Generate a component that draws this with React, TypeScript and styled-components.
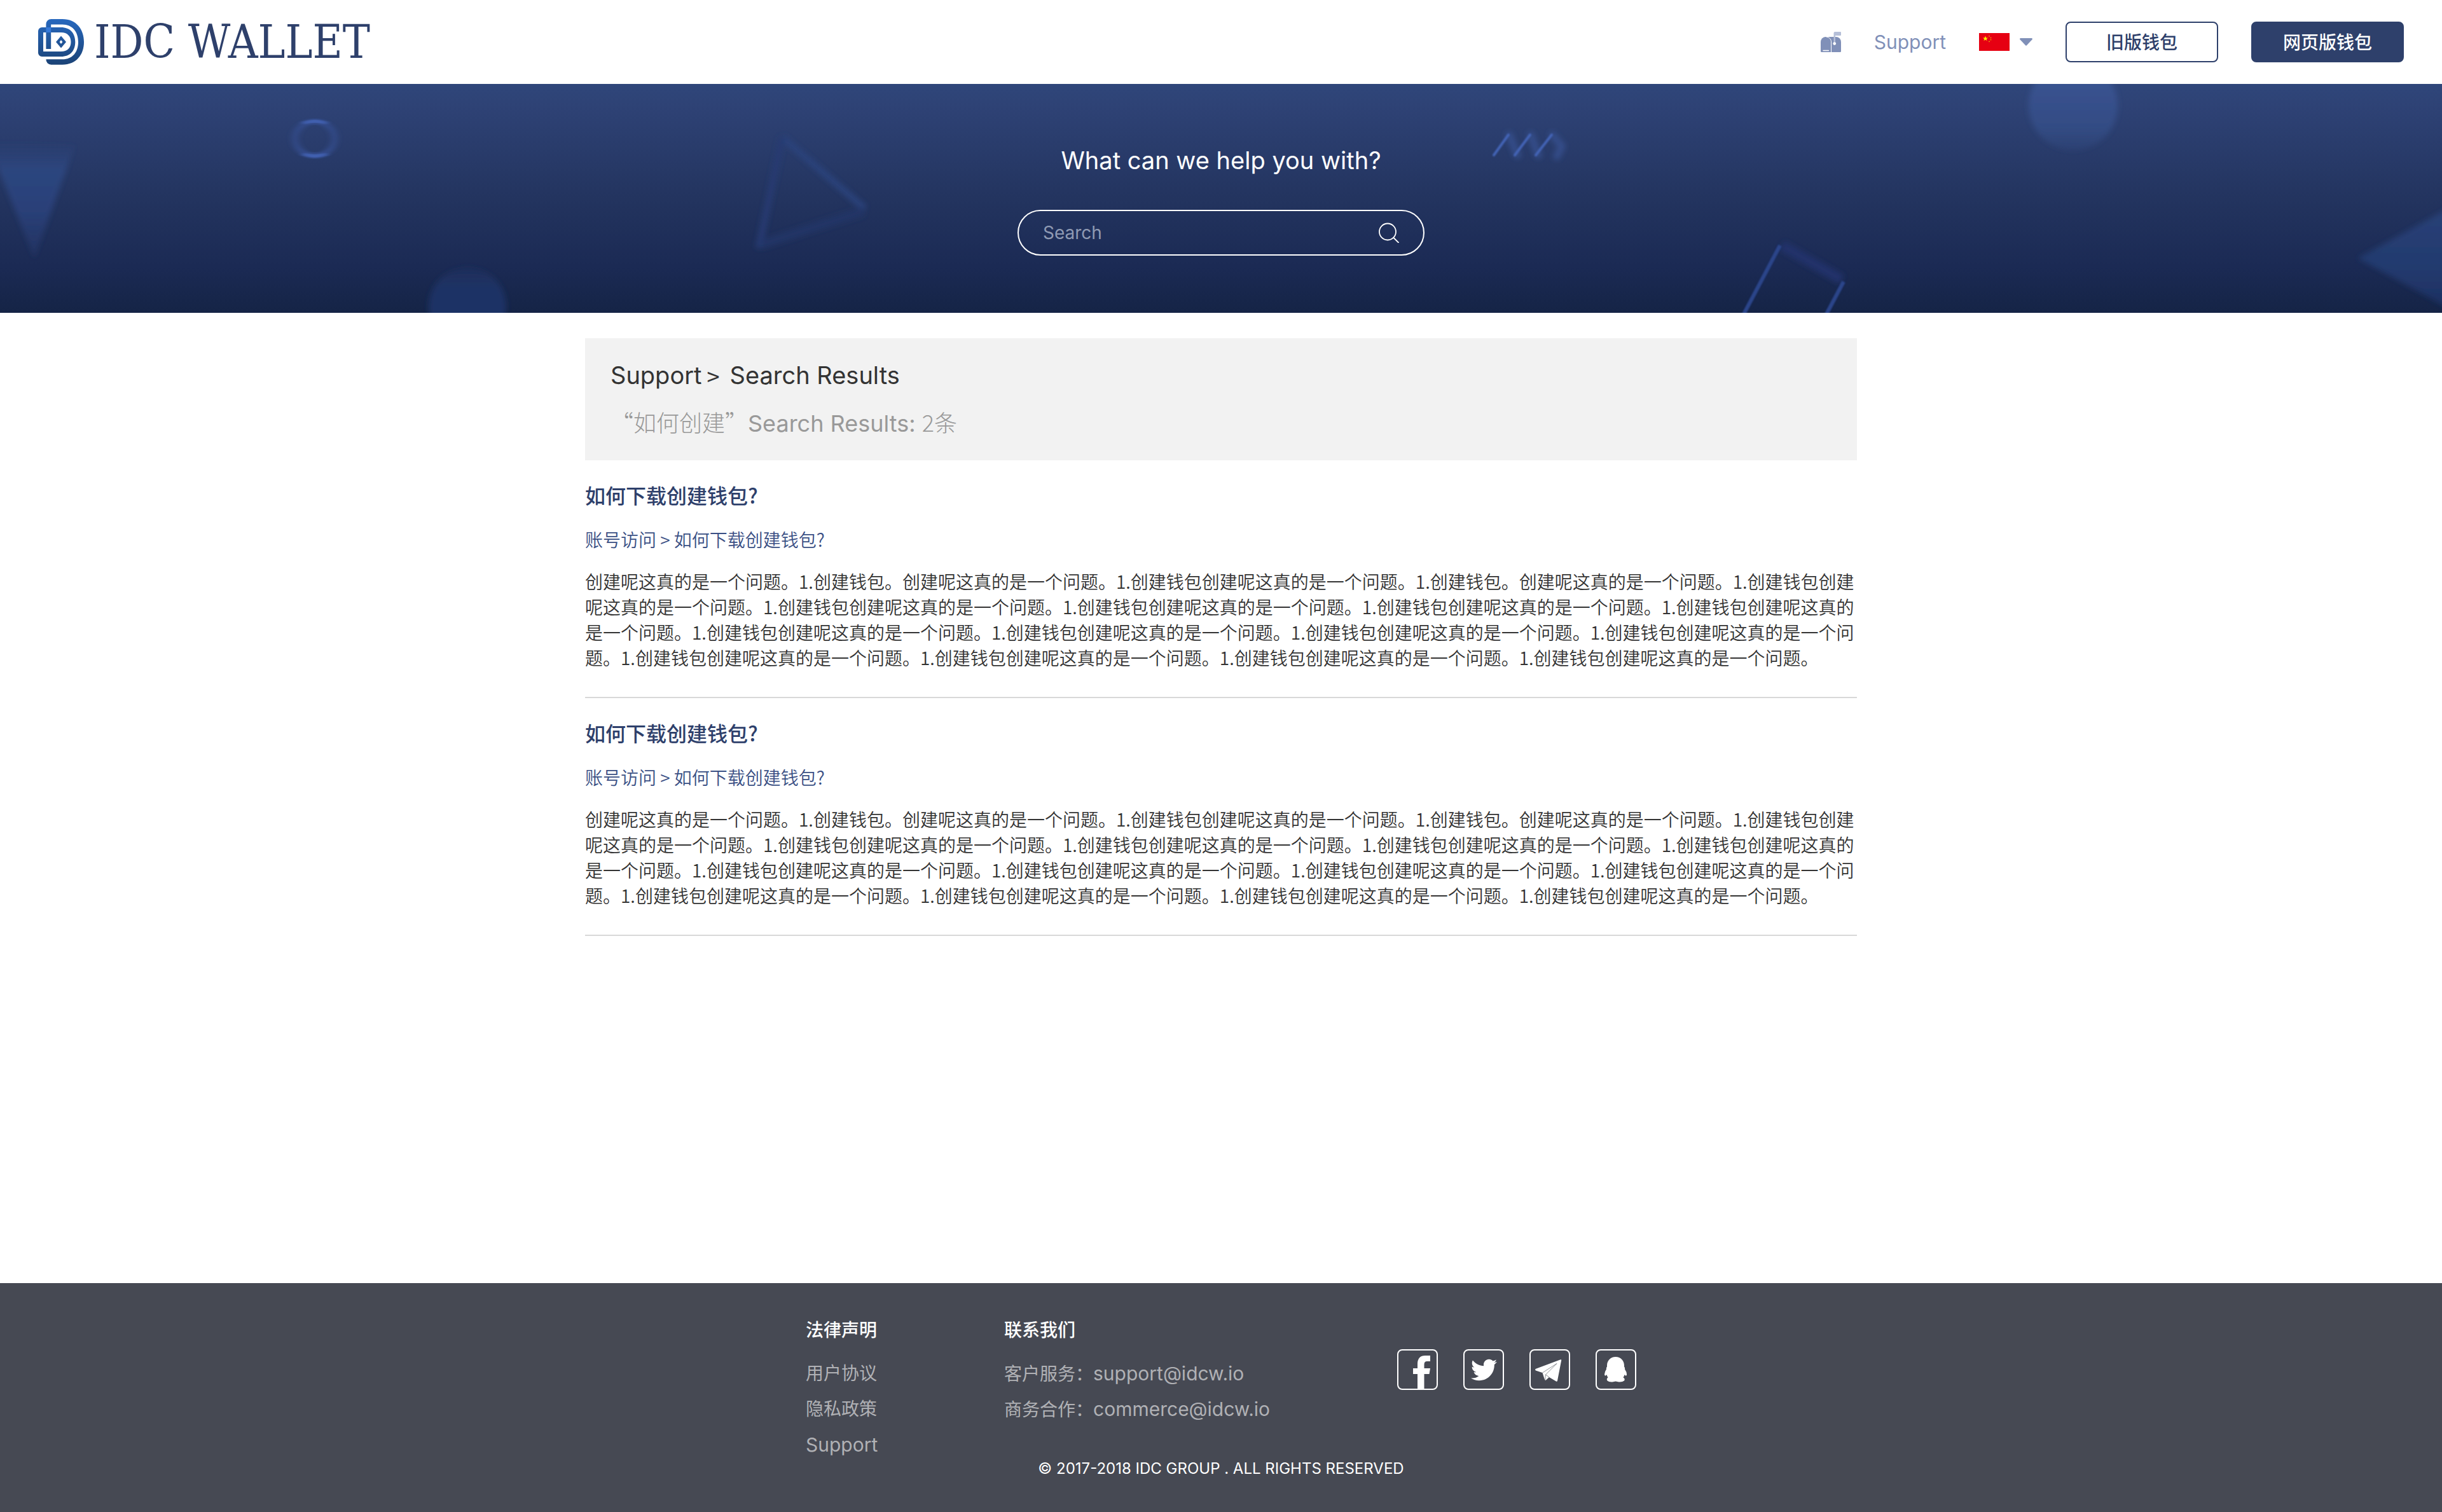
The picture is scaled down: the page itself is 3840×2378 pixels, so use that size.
import React from 'react';
import styled, { createGlobalStyle } from 'styled-components';
import { FaTwitter } from 'react-icons/fa';

const NAVY = '#2e406b';
const MUTED_BLUE = '#8090b8';
const CJK = "'Noto Sans CJK SC', sans-serif";

const GlobalStyle = createGlobalStyle`
  *, *::before, *::after { box-sizing: border-box; }
  body {
    margin: 0;
    background: #fff;
    color: #333;
    font-family: Inter, ${CJK};
    font-size: 28px;
    line-height: 40px;
  }
  h1, h2, h3, p, ul { margin: 0; padding: 0; }
  ul { list-style: none; }
  a { color: inherit; text-decoration: none; }
  svg { display: block; }
`;

const Page = styled.div`
  display: flex;
  flex-direction: column;
  min-height: 100vh;
`;

/* Header */

const Header = styled.header`
  display: flex;
  align-items: center;
  justify-content: space-between;
  height: 132px;
  padding: 0 60px;
`;

const Brand = styled.a`
  display: flex;
  align-items: center;
  gap: 16px;
  color: ${NAVY};
  font-family: 'DejaVu Serif Condensed', 'DejaVu Serif', serif;
  font-size: 72px;
  line-height: 72px;
`;

const Nav = styled.nav`
  display: flex;
  align-items: center;
  gap: 52px;
  color: ${MUTED_BLUE};
`;

const LatinLink = styled.a`
  font-size: 30px;
  line-height: 40px;
`;

const LanguageButton = styled.button`
  display: flex;
  align-items: center;
  gap: 16px;
  padding: 0;
  border: 0;
  background: none;
  cursor: pointer;
`;

const WalletButton = styled.button<{ $filled?: boolean }>`
  width: 240px;
  height: 64px;
  padding: 0 0 2px;
  border: 2px solid ${NAVY};
  border-radius: 8px;
  background: ${({ $filled }) => ($filled ? NAVY : '#fff')};
  color: ${({ $filled }) => ($filled ? '#fff' : NAVY)};
  font: 500 28px/40px ${CJK};
  cursor: pointer;
`;

/* Hero */

const Hero = styled.section`
  position: relative;
  display: flex;
  flex-direction: column;
  align-items: center;
  gap: 54px;
  height: 360px;
  padding-top: 96px;
  overflow: hidden;
  background: linear-gradient(#2f467a 0%, #2e4275 10%, #23345f 50%, #1b2a54 80%, #152446 100%);
`;

const HeroArt = styled.svg`
  position: absolute;
  inset: 0;
  width: 100%;
  height: 100%;
`;

const HeroTitle = styled.h1`
  position: relative;
  color: #fff;
  font-size: 38px;
  font-weight: 400;
  line-height: 48px;
`;

const SearchForm = styled.form`
  position: relative;
  display: flex;
  align-items: center;
  width: 640px;
  height: 72px;
  padding: 0 38px;
  border: 2px solid #fff;
  border-radius: 36px;
`;

const SearchInput = styled.input`
  flex: 1;
  min-width: 0;
  padding: 0;
  border: 0;
  outline: 0;
  background: none;
  color: #fff;
  font: inherit;
  &::placeholder { color: #8f9ab3; opacity: 1; }
`;

const SearchButton = styled.button`
  padding: 0;
  border: 0;
  background: none;
  cursor: pointer;
`;

/* Results */

const Main = styled.main`
  flex: 1;
  width: 100%;
  max-width: 2080px;
  margin: 0 auto;
  padding: 40px 40px 80px;
`;

const Summary = styled.section`
  display: flex;
  flex-direction: column;
  gap: 28px;
  padding: 34px 40px;
  background: #f2f2f2;
  font-size: 38px;
  line-height: 48px;
`;

const Trail = styled.nav`
  display: flex;
  gap: 8px;
`;

const Separator = styled.span`
  padding-right: 8px;
  font-family: ${CJK};
  font-size: 36px;
`;

const Count = styled.p`
  color: #999;
  font-size: 36px;
`;

const Cjk = styled.span`
  font-family: ${CJK};
  font-weight: 300;
  line-height: 1;
`;

const Result = styled.article`
  display: flex;
  flex-direction: column;
  padding: 30px 0 42px;
  border-bottom: 2px solid #d8d8d8;
  font-family: ${CJK};
  font-weight: 350;
`;

const ResultTitle = styled.h2`
  margin-bottom: 26px;
  color: ${NAVY};
  font-size: 32px;
  font-weight: 500;
  line-height: 48px;
`;

const ResultPath = styled.p`
  margin-bottom: 26px;
  color: #3a4f84;
`;

/* Footer */

const Footer = styled.footer`
  display: flex;
  flex-direction: column;
  gap: 2px;
  padding: 54px 40px 52px;
  background: #464953;
  color: #b0b1b5;
`;

const FooterColumns = styled.div`
  display: grid;
  grid-template-columns: 312px 618px 376px;
  justify-content: center;
`;

const FooterTitle = styled.h3`
  margin-bottom: 28px;
  color: #fff;
  font-size: 28px;
  font-weight: 500;
`;

const LinkList = styled.ul`
  display: flex;
  flex-direction: column;
  gap: 16px;
  li { height: 40px; }
`;

const SocialLinks = styled.div`
  display: flex;
  gap: 40px;
  padding-top: 50px;
`;

const SocialLink = styled.a`
  display: flex;
  align-items: center;
  justify-content: center;
  width: 64px;
  height: 64px;
  border: 2px solid #fff;
  border-radius: 8px;
  color: #fff;
`;

const Copyright = styled.p`
  color: #fff;
  font-size: 24px;
  line-height: 32px;
  text-align: center;
`;

const LogoMark = () => (
  <svg width="72" height="72" viewBox="0 0 72 72" aria-hidden="true">
    <defs>
      <linearGradient id="mark" gradientUnits="userSpaceOnUse" x1="0" y1="0" x2="0" y2="72">
        <stop offset="0" stopColor="#2768be" />
        <stop offset="1" stopColor="#1b4376" />
      </linearGradient>
    </defs>
    <g fill="url(#mark)">
      <path d="M12.4 47V8a8 8 0 0 1 8-8H38C60 0 72 16 72 36S60 71.7 38 71.7H20.4a8 8 0 0 1-8-8.4H38C54 63.3 63 52 63 36S54 8.4 38 8.4H20.2V47z" />
      <path
        fillRule="evenodd"
        d="M6 13H36C50 13 58.3 22 58.3 36S50 59 36 59H6a6 6 0 0 1-6-6V19a6 6 0 0 1 6-6zM8 21V51H36C46 51 51.5 45 51.5 36S46 21 36 21z"
      />
      <path fillRule="evenodd" d="M36 26.5L44 36L36 45.5L28 36zM36 33L33.6 36L36 39L38.4 36z" />
    </g>
    <rect x="12.4" y="13" width="7.8" height="8" fill="#3579d9" />
  </svg>
);

const MailboxIcon = () => (
  <svg width="32" height="32" viewBox="0 0 32 32" aria-hidden="true">
    <path d="M8 8H24a8 8 0 0 1 8 8V30.500a1.500 1.500 0 0 1-1.500 1.500H1.500A1.500 1.500 0 0 1 0 30.500V16a8 8 0 0 1 8-8z" fill="#8090b8" />
    <path d="M9 8.200C14 8.500 16.500 12 16.500 16V32" fill="none" stroke="#fff" strokeWidth="1" />
    <path d="M4 29.500H12.500" stroke="#fff" strokeWidth="1.400" strokeLinecap="round" />
    <path d="M20.500 19V2a2 2 0 0 1 2-2H31a1 1 0 0 1 1 1V5a1 1 0 0 1-1 1H23V19z" fill="#b5bfd8" />
    <circle cx="21.700" cy="18.600" r="2.400" fill="#fff" />
  </svg>
);

const ChinaFlag = () => (
  <svg width="48" height="28" viewBox="0 0 48 28" aria-hidden="true">
    <rect width="48" height="28" fill="#e60012" />
    <path d="M10 4.500L11.100 7.400H14L11.700 9.200L12.600 12L10 10.400L7.400 12L8.300 9.200L6 7.400H8.900z" fill="#fff100" />
    <g fill="#e8850c">
      <circle cx="16" cy="4.800" r="1" />
      <circle cx="18.500" cy="7.400" r="1" />
      <circle cx="18.500" cy="10.600" r="1" />
      <circle cx="16" cy="13.200" r="1" />
    </g>
  </svg>
);

const HeroShapes = () => (
  <HeroArt viewBox="0 0 3840 360" preserveAspectRatio="xMidYMid slice" aria-hidden="true">
    <defs>
      <filter id="soft" x="-30%" y="-30%" width="160%" height="160%">
        <feGaussianBlur stdDeviation="4" />
      </filter>
      <filter id="fine" x="-30%" y="-30%" width="160%" height="160%">
        <feGaussianBlur stdDeviation="1.2" />
      </filter>
      <filter id="side" x="-40%" y="-10%" width="180%" height="120%">
        <feGaussianBlur stdDeviation="5 0" />
      </filter>
      <linearGradient id="wedge" x1="0" y1="0" x2="0" y2="1">
        <stop offset="0" stopColor="#2e4780" stopOpacity="0" />
        <stop offset="0.25" stopColor="#2d467f" />
        <stop offset="0.6" stopColor="#294078" />
        <stop offset="1" stopColor="#26386c" stopOpacity="0.5" />
      </linearGradient>
      <linearGradient id="sunTop" x1="0" y1="0" x2="0" y2="1">
        <stop offset="0.3" stopColor="#39528f" />
        <stop offset="0.75" stopColor="#334c84" />
        <stop offset="1" stopColor="#2f4579" stopOpacity="0.6" />
      </linearGradient>
      <linearGradient id="sunBottom" x1="0" y1="0" x2="0" y2="1">
        <stop offset="0" stopColor="#1f3161" stopOpacity="0.6" />
        <stop offset="0.25" stopColor="#1f3365" />
        <stop offset="1" stopColor="#1d3165" />
      </linearGradient>
      <linearGradient id="rightWedge" x1="0" y1="0" x2="0" y2="1">
        <stop offset="0" stopColor="#2a4178" />
        <stop offset="0.6" stopColor="#223a6e" />
        <stop offset="1" stopColor="#1d2f60" />
      </linearGradient>
    </defs>
    <path d="M-20 90L118 96L54 274z" fill="url(#wedge)" filter="url(#soft)" />
    <g fill="none">
      <ellipse cx="495" cy="86" rx="31" ry="27" stroke="#304a86" strokeWidth="10" filter="url(#side)" />
      <path d="M477 62Q495 55 513 62M477 110Q495 117 513 110" stroke="#3f5fae" strokeWidth="5" filter="url(#side)" />
    </g>
    <g fill="none" filter="url(#soft)">
      <path d="M1230 84L1360 196" stroke="#29427b" strokeWidth="10" />
      <path d="M1230 84L1193 258" stroke="#263b72" strokeWidth="10" />
      <path d="M1358 200L1198 252" stroke="#213466" strokeWidth="14" />
    </g>
    <circle cx="735" cy="350" r="61" fill="url(#sunBottom)" filter="url(#soft)" />
    <circle cx="3260" cy="34" r="70" fill="url(#sunTop)" filter="url(#soft)" />
    <g fill="none" strokeLinecap="round">
      <path
        d="M2373 80L2386 112M2407 80L2419 112M2441 80L2456 98L2448 114"
        stroke="#344e8a"
        strokeWidth="11"
        filter="url(#soft)"
      />
      <path
        d="M2349 112L2372 80M2382 112L2406 80M2415 112L2440 80"
        stroke="#4363b5"
        strokeWidth="4"
        filter="url(#fine)"
      />
    </g>
    <path d="M2802 254L2896 308" stroke="#20336a" strokeWidth="16" filter="url(#soft)" />
    <path d="M2799 254L2742 362M2899 311L2872 362" stroke="#2b458a" strokeWidth="6" fill="none" filter="url(#fine)" />
    <path d="M3860 190L3708 274L3860 358z" fill="url(#rightWedge)" filter="url(#soft)" />
  </HeroArt>
);

const FacebookIcon = () => (
  <svg width="60" height="60" viewBox="2 2 60 60" aria-hidden="true">
    <path d="M32 63V39H25V30H32V23C32 14.500 36.500 10 44 10H52V19H47C44 19 42.500 20.500 42.500 24V30H52L50.500 39H42.500V63z" fill="#fff" />
  </svg>
);

const TelegramIcon = () => (
  <svg width="60" height="60" viewBox="2 2 60 60" aria-hidden="true">
    <path d="M9.500 31L49 16.200Q50.500 16 50.200 17.500L44 49.500Q43.500 51.500 42 50.500L31 44L26 48.500Q24.500 49.500 24 48L20.500 37L10 33.500Q8.300 32.500 9.500 31z" fill="#fff" />
    <path d="M20.500 37L43 22.500L25.500 40L24.500 49M25.500 40L31 44" fill="none" stroke="#464953" strokeWidth="0.600" />
  </svg>
);

const QqIcon = () => (
  <svg width="60" height="60" viewBox="2 2 60 60" aria-hidden="true">
    <path
      d="M31.500 12C39.500 12 45 18 45 25.500V27.500Q46.500 29 46 31.500Q49.500 36.500 49 40.500Q48 43 45.500 40Q45 42.500 43.500 44.500Q47 46.500 45 49.500Q42 52 36.500 51.500L31.500 50.500L26.500 51.500Q21 52 18.500 49.500Q16.500 46.500 19.500 44.500Q18 42.500 17.500 40Q15 43 14.200 40.500Q13.500 36.500 17 31.500Q16.500 29 18 27.500V25.500C18 18 23.500 12 31.500 12z"
      fill="#fff"
    />
  </svg>
);

const SENTENCE = '1.创建钱包创建呢这真的是一个问题。';
const OPENING = '创建呢这真的是一个问题。1.创建钱包。';
const EXCERPT = OPENING + '创建呢这真的是一个问题。' + SENTENCE + '1.创建钱包。创建呢这真的是一个问题。' + SENTENCE.repeat(13);

const RESULTS = [1, 2].map((id) => ({
  id,
  title: '如何下载创建钱包?',
  path: '账号访问 > 如何下载创建钱包?',
  excerpt: EXCERPT,
}));

const LEGAL_LINKS = ['用户协议', '隐私政策'];
const CONTACTS = [
  { label: '客户服务：', email: 'support@idcw.io' },
  { label: '商务合作：', email: 'commerce@idcw.io' },
];
const SOCIALS = [
  { name: 'Facebook', icon: <FacebookIcon /> },
  { name: 'Twitter', icon: <FaTwitter size={41} /> },
  { name: 'Telegram', icon: <TelegramIcon /> },
  { name: 'QQ', icon: <QqIcon /> },
];

export default function App() {
  return (
    <Page>
      <GlobalStyle />
      <Header>
        <Brand href="#">
          <LogoMark />
          IDC WALLET
        </Brand>
        <Nav>
          <a href="#" aria-label="Mail">
            <MailboxIcon />
          </a>
          <LatinLink href="#">Support</LatinLink>
          <LanguageButton type="button" aria-haspopup="listbox" aria-label="Language">
            <ChinaFlag />
            <svg width="20" height="12" viewBox="0 0 20 12" aria-hidden="true">
              <path d="M1 0H19Q20.500 1 19.500 2.200L11 11.300Q10 12.300 9 11.300L0.500 2.200Q-0.500 1 1 0z" fill={MUTED_BLUE} />
            </svg>
          </LanguageButton>
          <WalletButton type="button">旧版钱包</WalletButton>
          <WalletButton type="button" $filled>网页版钱包</WalletButton>
        </Nav>
      </Header>

      <Hero>
        <HeroShapes />
        <HeroTitle>What can we help you with?</HeroTitle>
        <SearchForm role="search" onSubmit={(event) => event.preventDefault()}>
          <SearchInput type="text" placeholder="Search" aria-label="Search" />
          <SearchButton type="submit" aria-label="Search">
            <svg width="32" height="32" viewBox="0 0 32 32" fill="none" stroke="#fff" strokeWidth="1.800" aria-hidden="true">
              <circle cx="14" cy="14.500" r="13" />
              <path d="M23.500 24L31 31.500" strokeLinecap="round" />
            </svg>
          </SearchButton>
        </SearchForm>
      </Hero>

      <Main>
        <Summary>
          <Trail aria-label="Breadcrumb">
            <a href="#">Support</a>
            <Separator>&gt;</Separator>
            <span>Search Results</span>
          </Trail>
          <Count>
            <Cjk>“如何创建”</Cjk>Search Results: <Cjk>2条</Cjk>
          </Count>
        </Summary>
        {RESULTS.map((result) => (
          <Result key={result.id}>
            <ResultTitle>
              <a href="#">{result.title}</a>
            </ResultTitle>
            <ResultPath>{result.path}</ResultPath>
            <p>{result.excerpt}</p>
          </Result>
        ))}
      </Main>

      <Footer>
        <FooterColumns>
          <div>
            <FooterTitle>法律声明</FooterTitle>
            <LinkList>
              {LEGAL_LINKS.map((name) => (
                <li key={name}>
                  <a href="#">{name}</a>
                </li>
              ))}
              <li>
                <LatinLink href="#">Support</LatinLink>
              </li>
            </LinkList>
          </div>
          <div>
            <FooterTitle>联系我们</FooterTitle>
            <LinkList>
              {CONTACTS.map(({ label, email }) => (
                <li key={email}>
                  {label}
                  <LatinLink href={`mailto:${email}`}>{email}</LatinLink>
                </li>
              ))}
            </LinkList>
          </div>
          <SocialLinks>
            {SOCIALS.map(({ name, icon }) => (
              <SocialLink key={name} href="#" aria-label={name}>
                {icon}
              </SocialLink>
            ))}
          </SocialLinks>
        </FooterColumns>
        <Copyright>© 2017-2018 IDC GROUP . ALL RIGHTS RESERVED</Copyright>
      </Footer>
    </Page>
  );
}
